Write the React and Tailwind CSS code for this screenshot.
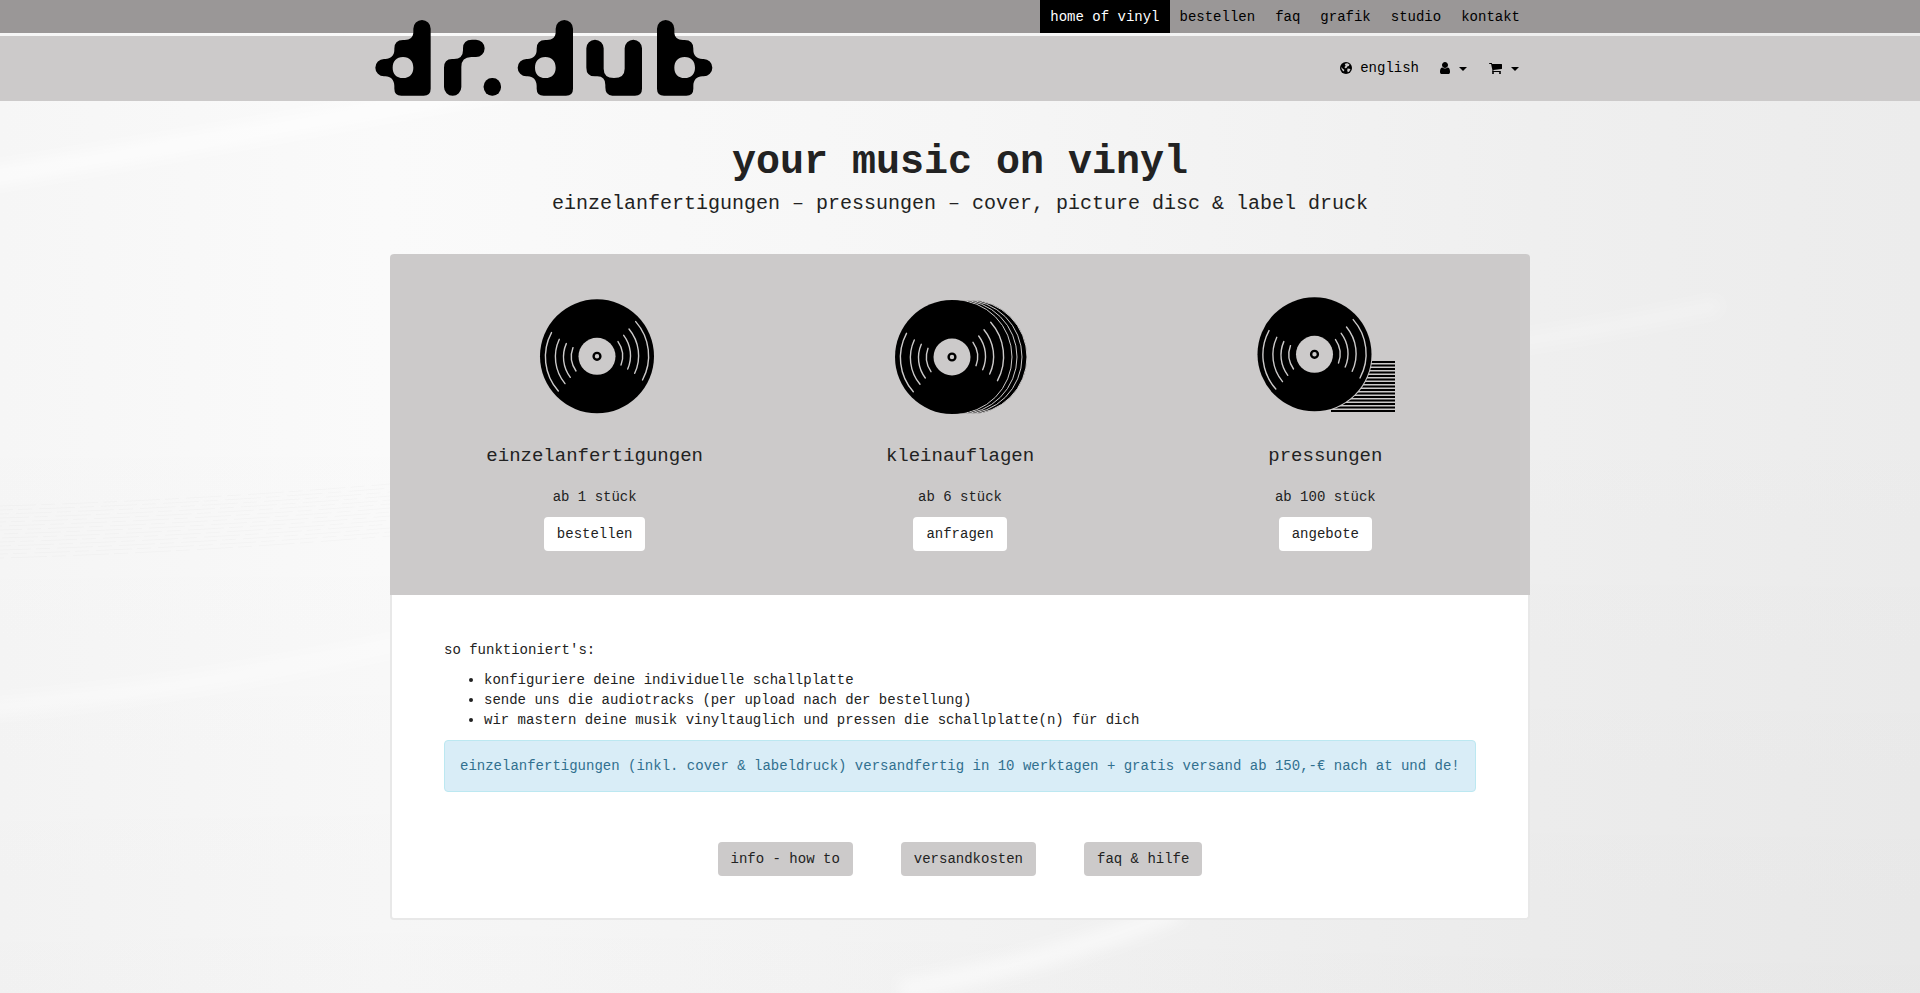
import { clsx } from 'clsx';

const mainNav = ['home of vinyl', 'bestellen', 'faq', 'grafik', 'studio', 'kontakt'];

const steps = [
  'konfiguriere deine individuelle schallplatte',
  'sende uns die audiotracks (per upload nach der bestellung)',
  'wir mastern deine musik vinyltauglich und pressen die schallplatte(n) für dich',
];

const helpLinks = ['info - how to', 'versandkosten', 'faq & hilfe'];

function Logo() {
  const d =
    'M160 86A26 26 0 0 1 212 86V266Q212 287 191 287H124Q103 287 103 266V258C103 240 92 229 76 229H72A26 26 0 0 1 72 177H76C92 177 103 166 103 150V146Q103 120 129 120H134C150 120 160 112 160 96ZM129 171C109 171 98 184 98 203S109 234 129 234S160 222 160 203S149 171 129 171Z';
  return (
    <svg viewBox="45 60 1014 228" className="h-[76px] w-[338px]" role="img" aria-label="dr.dub" fillRule="evenodd">
      <path d={d} />
      <path d="M252 203Q252 177 276 177H282Q309 177 309 151V145Q309 119 336 119H348A26 26 0 0 1 348 171H334Q304 171 304 201V261A26 26 0 0 1 252 261Z" />
      <rect x="371" y="234" width="52" height="53" rx="25" />
      <path d={d} transform="translate(427 0)" />
      <path d="M679 145A26 26 0 0 1 731 145V206Q731 234 762 234Q794 234 794 206V145A26 26 0 0 1 846 145V266Q846 287 825 287H757Q736 287 736 262V255Q736 229 712 229H705Q679 229 679 203Z" />
      <path d={d} transform="translate(1103 0) scale(-1 1)" />
    </svg>
  );
}

function GlobeIcon() {
  return (
    <svg viewBox="0 0 24 24" className="size-3" aria-hidden="true">
      <circle cx="12" cy="12" r="12" />
      <g fill="#cccaca">
        <path d="M11 3L15 2.500L19 5L17.500 8L14.500 9L13 12L10 12.500L9 10L11.500 7.500L9.500 5.500Z" />
        <path d="M15 13L19 13.500L21 15L18 19.500L15.500 20.500L14.500 17Z" />
        <path d="M3 10L5.500 13.500L8.500 15.500L8 19L5 17L3 13.500Z" />
      </g>
    </svg>
  );
}

function UserIcon() {
  return (
    <svg viewBox="0 128 1280 1536" className="h-3 w-[10px]" aria-hidden="true">
      <path d="M1280 1399q0 109-62.500 187t-150.500 78h-854q-88 0-150.500-78t-62.500-187q0-85 8.500-160.500t31.500-152 58.500-131 94-89 134.500-34.500q131 128 313 128t313-128q76 0 134.500 34.500t94 89 58.500 131 31.500 152 8.500 160.500zM1024 512q0 159-112.500 271.500t-271.500 112.500-271.500-112.500-112.500-271.500 112.500-271.500 271.500-112.500 271.500 112.500 112.500 271.500z" />
    </svg>
  );
}

function CartIcon() {
  return (
    <svg viewBox="64 256 1664 1408" className="h-[11px] w-[13px]" aria-hidden="true">
      <path d="M704 1536q0 52-38 90t-90 38-90-38-38-90 38-90 90-38 90 38 38 90zm896 0q0 52-38 90t-90 38-90-38-38-90 38-90 90-38 90 38 38 90zm128-1088v512q0 24-16.500 42.500t-40.500 21.500l-1044 122q13 60 13 70 0 16-24 64h920q26 0 45 19t19 45-19 45-45 19h-1024q-26 0-45-19t-19-45q0-11 8-31.500t16-36 21.500-40 15.500-29.500l-177-823h-204q-26 0-45-19t-19-45 19-45 45-19h256q16 0 28.500 6.500t19.500 15.500 13 24.500 8 26 5.500 29.500 4.500 26h1201q26 0 45 19t19 45z" />
    </svg>
  );
}

function Caret() {
  return <span className="mt-0.5 border-x-4 border-t-4 border-x-transparent border-t-black" />;
}

// grooves are point symmetric, so the right half is the left half turned by 180 degrees
function Grooves() {
  return (
    <g fill="none" stroke="#cccaca" strokeWidth="1.4" strokeLinecap="round">
      <path d="M-45.500 -23.700A51.500 51.500 0 0 0 -38.700 34.700" />
      <path d="M-37.700 -17A41.700 41.700 0 0 0 -32 27.300" />
      <path d="M-30.700 -12.700A33.500 33.500 0 0 0 -26.700 21" />
      <path d="M-24 -8.700A25.500 25.500 0 0 0 -21 14.700" />
    </g>
  );
}

function Disc({ x, y }) {
  return (
    <g transform={`translate(${x} ${y})`}>
      <circle r="57" />
      <Grooves />
      <g transform="rotate(180)">
        <Grooves />
      </g>
      <circle r="18.500" fill="#cccaca" />
      <circle r="3.400" fill="none" stroke="#000" strokeWidth="2.400" />
    </g>
  );
}

function SingleDisc() {
  return (
    <svg viewBox="0 0 160 140" className="h-[140px] w-[160px]" aria-hidden="true">
      <Disc x={82} y={71.3} />
    </svg>
  );
}

function DiscStack() {
  return (
    <svg viewBox="0 0 160 140" className="h-[140px] w-[160px]" aria-hidden="true">
      {[90, 85, 80, 75].map((x) => (
        <circle key={x} cx={x} cy="72" r="57" stroke="#cccaca" strokeWidth="1" />
      ))}
      <Disc x={72} y={72} />
    </svg>
  );
}

function DiscPile() {
  const lines = Array.from({ length: 15 }, (_, i) => 76 + i * 3.5);
  return (
    <svg viewBox="0 0 160 140" className="h-[140px] w-[160px]" aria-hidden="true">
      {lines.map((y) => (
        <rect key={y} x="86" y={y} width="64" height="2" />
      ))}
      <circle cx="69.500" cy="69.300" r="58" fill="#cccaca" />
      <Disc x={69.5} y={69.3} />
    </svg>
  );
}

const products = [
  { title: 'einzelanfertigungen', amount: 'ab 1 stück', action: 'bestellen', Art: SingleDisc },
  { title: 'kleinauflagen', amount: 'ab 6 stück', action: 'anfragen', Art: DiscStack },
  { title: 'pressungen', amount: 'ab 100 stück', action: 'angebote', Art: DiscPile },
];

function Header() {
  return (
    <header className="relative text-black">
      <div className="bg-[#9a9797]">
        <nav className="mx-auto flex max-w-[1170px] justify-end px-[15px]">
          {mainNav.map((item, i) => (
            <a
              key={item}
              href="#"
              className={clsx('px-[10px] pt-[7px] pb-[6px]', i === 0 && 'bg-black text-white')}
            >
              {item}
            </a>
          ))}
        </nav>
      </div>
      <div className="mt-[3px] bg-[#cccaca]">
        <div className="mx-auto flex max-w-[1170px] justify-end px-[15px] pt-[22px] pb-[23px]">
          <a href="#" className="flex items-center gap-2 px-[10px]">
            <GlobeIcon />
            english
          </a>
          <button type="button" aria-label="konto" className="flex items-center gap-[9px] px-[11px]">
            <UserIcon />
            <Caret />
          </button>
          <button type="button" aria-label="warenkorb" className="flex items-center gap-[9px] px-[11px]">
            <CartIcon />
            <Caret />
          </button>
        </div>
      </div>
      <div className="pointer-events-none absolute inset-x-0 top-5">
        <div className="mx-auto max-w-[1170px]">
          <a href="#" className="pointer-events-auto inline-block">
            <Logo />
          </a>
        </div>
      </div>
    </header>
  );
}

function Backdrop() {
  const ridges = Array.from({ length: 14 }, (_, i) => 506 + i * 4);
  return (
    <svg
      viewBox="0 0 1920 993"
      preserveAspectRatio="none"
      className="absolute inset-0 -z-10 size-full"
      aria-hidden="true"
    >
      <defs>
        <linearGradient id="shade" x1="0" y1="0" x2="1" y2="0">
          <stop offset="0" stopColor="#f6f6f6" />
          <stop offset="0.2" stopColor="#fafafa" />
          <stop offset="0.5" stopColor="#f6f6f6" />
          <stop offset="0.8" stopColor="#efefef" />
          <stop offset="1" stopColor="#ececec" />
        </linearGradient>
        <linearGradient id="floor" x1="0" y1="0" x2="0" y2="1">
          <stop offset="0.4" stopColor="#000" stopOpacity="0" />
          <stop offset="1" stopColor="#000" stopOpacity="0.02" />
        </linearGradient>
        <filter id="soft" x="-20%" y="-50%" width="140%" height="200%">
          <feGaussianBlur stdDeviation="7" />
        </filter>
      </defs>
      <rect width="1920" height="993" fill="url(#shade)" />
      <rect width="1920" height="993" fill="url(#floor)" />
      <g fill="none" stroke="#fff" filter="url(#soft)">
        <path d="M-40 182Q220 140 520 84" strokeWidth="18" strokeOpacity="0.6" />
        <path d="M-40 710Q200 692 460 630" strokeWidth="16" strokeOpacity="0.4" />
        <path d="M900 990Q1060 960 1180 910" strokeWidth="20" strokeOpacity="0.5" />
        <path d="M1500 345Q1600 330 1720 305" strokeWidth="14" strokeOpacity="0.25" />
      </g>
      <g fill="none" stroke="#000" strokeOpacity="0.02" strokeDasharray="36 5 14 7">
        {ridges.map((y, i) => (
          <path key={y} d={`M0 ${y}Q200 ${y - 6} 390 ${y - 22}`} strokeDashoffset={i * 23} />
        ))}
      </g>
    </svg>
  );
}

function App() {
  return (
    <div className="relative isolate min-h-screen pb-[73px] font-['Liberation_Mono',monospace] text-[14px] leading-5 text-[#222]">
      <Backdrop />
      <Header />
      <main className="mx-auto max-w-[1170px] px-[15px]">
        <div className="pt-10 text-center">
          <h1 className="text-[40px] leading-[44px] font-bold">your music on vinyl</h1>
          <p className="mt-2 text-[20px] leading-[22px]">
            einzelanfertigungen – pressungen – cover, picture disc &amp; label druck
          </p>
        </div>

        <section className="mt-[39px] grid grid-cols-3 rounded-t bg-[#cccaca] px-[22px] pt-[31px] pb-11">
          {products.map(({ title, amount, action, Art }) => (
            <div key={title} className="flex flex-col items-center">
              <Art />
              <h2 className="mt-[21px] text-[19px] leading-[21px]">{title}</h2>
              <p className="mt-5">{amount}</p>
              <a href="#" className="mt-[10px] rounded bg-white px-[13px] py-[7px]">
                {action}
              </a>
            </div>
          ))}
        </section>

        <section className="rounded-b border-2 border-t-0 border-[#e8e8e8] bg-white px-[52px] pt-[45px] pb-[42px]">
          <p>so funktioniert's:</p>
          <ul className="mt-[10px] list-disc pl-10">
            {steps.map((step) => (
              <li key={step}>{step}</li>
            ))}
          </ul>
          <div className="mt-[10px] rounded border border-[#bce8f1] bg-[#d9edf7] p-[15px] text-[#31708f]">
            einzelanfertigungen (inkl. cover &amp; labeldruck) versandfertig in 10 werktagen + gratis versand ab 150,-€ nach at und de!
          </div>
          <div className="mt-[50px] flex justify-center gap-12">
            {helpLinks.map((label) => (
              <a key={label} href="#" className="rounded bg-[#cccaca] px-[13px] py-[7px]">
                {label}
              </a>
            ))}
          </div>
        </section>
      </main>
    </div>
  );
}

export default App;
